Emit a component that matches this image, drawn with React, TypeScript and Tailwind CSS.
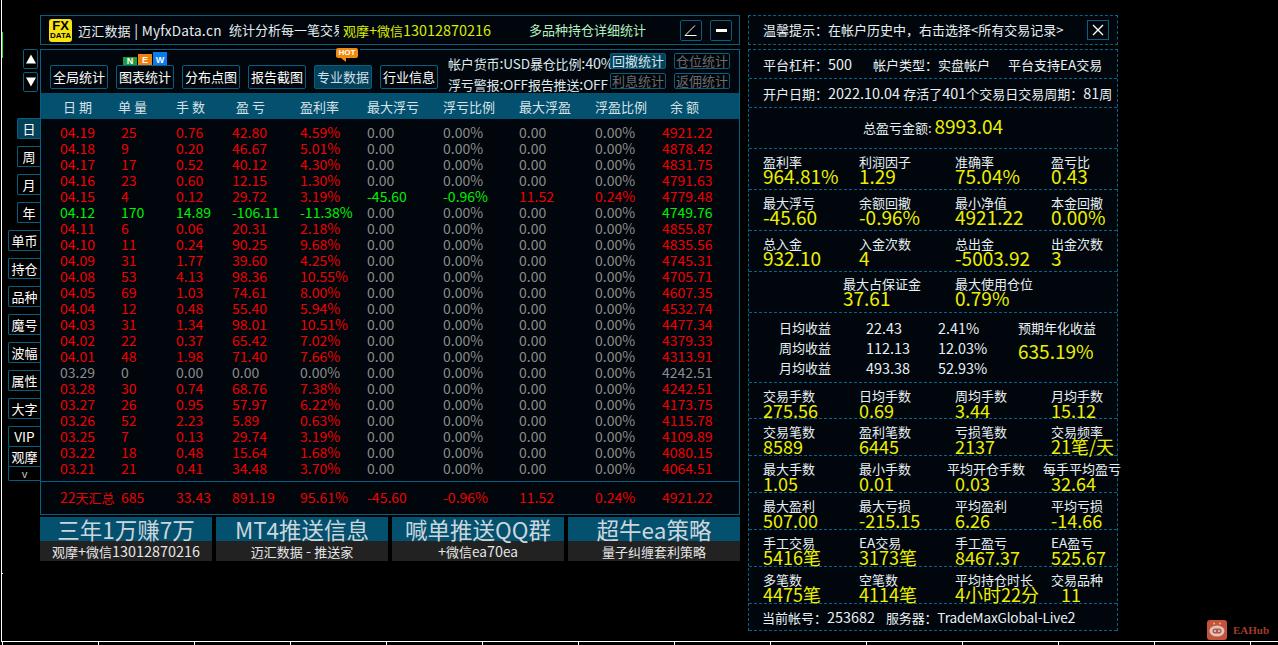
import type { ReactNode } from "react";

const RED = "text-[#f00000]";
const GREEN = "text-[#00f000]";
const GREY = "text-[#8c8c8c]";
const YELLOW = "text-[#ecf000]";

const COLS = "grid grid-cols-[61px_55px_56px_68px_67px_76px_76px_76px_67px_1fr]";

const headers = [
  { label: "日 期", cls: "pl-[3px]" },
  { label: "单 量", cls: "-ml-[3px]" },
  { label: "手 数", cls: "" },
  { label: "盈 亏", cls: "pl-[4px]" },
  { label: "盈利率", cls: "" },
  { label: "最大浮亏", cls: "" },
  { label: "浮亏比例", cls: "" },
  { label: "最大浮盈", cls: "" },
  { label: "浮盈比例", cls: "" },
  { label: "余 额", cls: "pl-[8px]" },
];

const rows = [
  ["04.19", "25", "0.76", "42.80", "4.59%", "4921.22"],
  ["04.18", "9", "0.20", "46.67", "5.01%", "4878.42"],
  ["04.17", "17", "0.52", "40.12", "4.30%", "4831.75"],
  ["04.16", "23", "0.60", "12.15", "1.30%", "4791.63"],
  ["04.15", "4", "0.12", "29.72", "3.19%", "4779.48"],
  ["04.12", "170", "14.89", "-106.11", "-11.38%", "4749.76"],
  ["04.11", "6", "0.06", "20.31", "2.18%", "4855.87"],
  ["04.10", "11", "0.24", "90.25", "9.68%", "4835.56"],
  ["04.09", "31", "1.77", "39.60", "4.25%", "4745.31"],
  ["04.08", "53", "4.13", "98.36", "10.55%", "4705.71"],
  ["04.05", "69", "1.03", "74.61", "8.00%", "4607.35"],
  ["04.04", "12", "0.48", "55.40", "5.94%", "4532.74"],
  ["04.03", "31", "1.34", "98.01", "10.51%", "4477.34"],
  ["04.02", "22", "0.37", "65.42", "7.02%", "4379.33"],
  ["04.01", "48", "1.98", "71.40", "7.66%", "4313.91"],
  ["03.29", "0", "0.00", "0.00", "0.00%", "4242.51"],
  ["03.28", "30", "0.74", "68.76", "7.38%", "4242.51"],
  ["03.27", "26", "0.95", "57.97", "6.22%", "4173.75"],
  ["03.26", "52", "2.23", "5.89", "0.63%", "4115.78"],
  ["03.25", "7", "0.13", "29.74", "3.19%", "4109.89"],
  ["03.22", "18", "0.48", "15.64", "1.68%", "4080.15"],
  ["03.21", "21", "0.41", "34.48", "3.70%", "4064.51"],
];

const summary = ["22天汇总", "685", "33.43", "891.19", "95.61%", "-45.60", "-0.96%", "11.52", "0.24%", "4921.22"];

const banners = [
  { big: "三年1万赚7万", small: "观摩+微信13012870216" },
  { big: "MT4推送信息", small: "迈汇数据 - 推送家" },
  { big: "喊单推送QQ群", small: "+微信ea70ea" },
  { big: "超牛ea策略", small: "量子纠缠套利策略" },
];

const tools = ["全局统计", "图表统计", "分布点图", "报告截图", "专业数据", "行业信息"];
const tabsA = ["日", "周", "月", "年"];
const tabsB = ["单币", "持仓", "品种", "魔号", "波幅", "属性", "大字"];

// the CJK runs in the reference are 13px while its digits are wider, so mixed strings get split
function T({ text }: { text: string }) {
  const parts = text.split(/([\u3000-\u303f\u4e00-\u9fff\uff00-\uffef]+|[A-Za-z]+)/).filter(Boolean);
  return (
    <>
      {parts.map((p, i) => {
        if (/^[A-Za-z]/.test(p)) return <span key={i} className="text-[13.6px]">{p}</span>;
        if (/^[\u3000-\u303f\u4e00-\u9fff\uff00-\uffef]/.test(p)) return <span key={i} className="text-[13px]">{p}</span>;
        return <span key={i}>{p}</span>;
      })}
    </>
  );
}

function rowColor(date: string) {
  if (date === "03.29") return GREY;
  if (date === "04.12") return GREEN;
  return RED;
}

function TableRow({ row }: { row: string[] }) {
  const color = rowColor(row[0]);
  const isLoss = row[0] === "04.15";
  return (
    <div className={`${COLS} h-4 text-[14px] leading-4 pl-[19px]`}>
      {row.slice(0, 5).map((cell, i) => (
        <span key={i} className={color}>{cell}</span>
      ))}
      <span className={isLoss ? GREEN : GREY}>{isLoss ? "-45.60" : "0.00"}</span>
      <span className={isLoss ? GREEN : GREY}>{isLoss ? "-0.96%" : "0.00%"}</span>
      <span className={isLoss ? RED : GREY}>{isLoss ? "11.52" : "0.00"}</span>
      <span className={isLoss ? RED : GREY}>{isLoss ? "0.24%" : "0.00%"}</span>
      <span className={color}>{row[5]}</span>
    </div>
  );
}

function Tab({ label, active, className }: { label: string; active?: boolean; className: string }) {
  return (
    <div
      className={`flex items-center justify-center border border-r-0 border-[#045f80] rounded-l-[2px] text-white ${
        active ? "bg-[#03405a]" : "bg-black"
      } ${className}`}
    >
      <T text={label} />
    </div>
  );
}

function ArrowButton({ up }: { up?: boolean }) {
  return (
    <div className="w-[15px] h-5 mr-[2px] flex items-center justify-center border border-[#045f80] rounded-[2px]">
      <svg width="10" height="10" viewBox="0 0 10 10">
        <polygon points={up ? "5,0.5 10,9.5 0,9.5" : "0,0.5 10,0.5 5,9.5"} fill="#fff" />
      </svg>
    </div>
  );
}

function SmallButton({ label, active }: { label: string; active?: boolean }) {
  return (
    <div
      className={`w-[56px] h-[16px] flex items-center justify-center overflow-hidden whitespace-nowrap border border-[#045f80] rounded-[2px] text-[13px] leading-[14px] ${
        active ? "bg-[#03405a] text-[#d5e5ea]" : "text-[#6c6c6c]"
      }`}
    >
      {label}
    </div>
  );
}

function Section({ className, children }: { className: string; children: ReactNode }) {
  return (
    <div className={`border-b border-dashed border-[#04658a] overflow-visible box-border ${className}`}>
      {children}
    </div>
  );
}

type Stat = { label: string; value: string; labelCls?: string; valueCls?: string };

function StatRow({ stats, size, className }: { stats: Stat[]; size: string; className: string }) {
  return (
    <Section className={`grid grid-cols-[96px_96px_96px_1fr] pl-[14px] pt-[4px] ${className}`}>
      {stats.map((s) => (
        <div key={s.label} className="whitespace-nowrap">
          <div className={`leading-[15px] text-[#e8f0f4] ${s.labelCls ?? ""}`}><T text={s.label} /></div>
          <div className={`${size} leading-[14px] ${YELLOW} ${s.valueCls ?? ""}`}>{s.value}</div>
        </div>
      ))}
    </Section>
  );
}

function Logo() {
  return (
    <div className="w-[23px] h-[23px] bg-[#f7e310] rounded-[3px] flex flex-col items-center justify-center text-black font-bold [font-family:'Liberation_Sans',sans-serif] mr-[6px] shrink-0">
      <span className="text-[13px] leading-[11px]">FX</span>
      <span className="text-[8px] leading-[9px]">DATA</span>
    </div>
  );
}

function EAHubBadge() {
  return (
    <div className="absolute left-[1207px] top-[620px] flex items-center gap-[6px]">
      <svg width="20" height="20" viewBox="0 0 20 20">
        <rect width="20" height="20" rx="3" fill="#c4533a" />
        <circle cx="7" cy="3.5" r="1" fill="#d9b8ac" />
        <circle cx="13" cy="3.5" r="1" fill="#d9b8ac" />
        <ellipse cx="10" cy="11" rx="7.5" ry="5.5" fill="#d8c6bf" />
        <rect x="5.5" y="8.5" width="9" height="5" rx="2.5" fill="#b5563f" />
        <circle cx="8" cy="11" r="1" fill="#e6d8d2" />
        <circle cx="12" cy="11" r="1" fill="#e6d8d2" />
      </svg>
      <span className="text-[11px] font-bold leading-5 text-[#a03c28] [font-family:'Liberation_Serif',serif]">EAHub</span>
    </div>
  );
}

function ChartAxes() {
  const ticks = Array.from({ length: 14 }, (_, i) => 2.5 + 96 * i);
  return (
    <svg className="absolute inset-0 pointer-events-none" width="1278" height="645" viewBox="0 0 1278 645">
      <line x1="1.5" y1="0" x2="1.5" y2="641" stroke="#fff" />
      <line x1="2.5" y1="32" x2="2.5" y2="58" stroke="#22dd22" />
      <line x1="2" y1="573.5" x2="3" y2="573.5" stroke="#fff" />
      <line x1="1" y1="641.5" x2="1278" y2="641.5" stroke="#fff" />
      {ticks.map((x) => (
        <line key={x} x1={x} y1="642" x2={x} y2="645" stroke="#fff" />
      ))}
    </svg>
  );
}

export default function App() {
  return (
    <div className="relative h-[645px] w-full overflow-hidden bg-black text-[14.4px] text-white [font-family:'Noto_Sans_CJK_SC','Noto_Sans',sans-serif]">
      <ChartAxes />
      <EAHubBadge />

      <div className="relative flex pt-[15px] pl-2">
        {/* left tabs */}
        <div className="w-8 flex flex-col items-end pt-[34px]">
          <ArrowButton up />
          <div className="h-[3px]" />
          <ArrowButton />
          <div className="h-[26px]" />
          <div className="flex flex-col gap-[7px] items-end">
            {tabsA.map((t, i) => (
              <Tab key={t} label={t} active={i === 0} className="w-[23px] h-[21px]" />
            ))}
            {tabsB.map((t) => (
              <Tab key={t} label={t} className="w-8 h-[21px]" />
            ))}
          </div>
          <Tab label="VIP" className="w-8 h-[21px] mt-[7px]" />
          <Tab label="观摩" className="w-8 h-[21px] -mt-px" />
          <div className="w-8 h-[15px] -mt-px flex items-center justify-center border border-r-0 border-[#045f80] rounded-bl-[2px] text-[11px] leading-none text-[#ccc]">
            v
          </div>
        </div>

        {/* center */}
        <div className="w-[700px]">
          <div className="h-[30px] flex items-center border border-[#045f80] bg-[#00060b] pl-2 whitespace-nowrap">
            <Logo />
            <span className="w-[151px] tracking-[0.2px] text-[#e4edf2]"><T text="迈汇数据 | MyfxData.cn" /></span>
            <span className="w-[110px] overflow-hidden text-[13px] text-[#e4edf2] mr-[4px]">统计分析每一笔交易数据</span>
            <span className="w-[186px] text-[#dcec00]"><T text="观摩+微信13012870216" /></span>
            <span className="w-[151px] text-[13px] text-[#b5f0c0]">多品种持仓详细统计</span>
            <div className="w-[22px] h-[21px] border border-[#045f80] rounded-[2px] flex items-center justify-center">
              <svg width="14" height="14" viewBox="0 0 14 14">
                <path d="M1 12.5H12.5M1 12.5L11 2.5" stroke="#fff" fill="none" strokeWidth="1" />
              </svg>
            </div>
            <div className="w-[22px] h-[21px] ml-2 border border-[#045f80] rounded-[2px] flex items-center justify-center">
              <div className="w-[11px] h-[3px] bg-white" />
            </div>
          </div>

          <div className="relative mt-1 h-[466px] border border-[#045f80] bg-[#00060b]">
            {/* toolbar */}
            <div className="relative h-[43px] flex">
              <div className="flex gap-2 pl-[9px] pt-[15px]">
                {tools.map((t, i) => (
                  <div
                    key={t}
                    className={`w-[58px] h-6 flex items-center justify-center text-[13px] whitespace-nowrap border border-[#045f80] rounded-[2px] ${
                      i === 4 ? "bg-[#03405a] text-[#cfdfe6]" : "text-white"
                    }`}
                  >
                    {t}
                  </div>
                ))}
              </div>
              <div className="ml-[10px] w-[162px] pt-[3px] tracking-[-0.15px] text-[#dfe8ec] whitespace-nowrap leading-5">
                <div><T text="帐户货币:USD暴仓比例:40%" /></div>
                <div><T text="浮亏警报:OFF报告推送:OFF" /></div>
              </div>
              <div className="pt-[3px] grid grid-cols-[56px_56px] gap-x-2 gap-y-1 h-fit">
                <SmallButton label="回撤统计" active />
                <SmallButton label="仓位统计" />
                <SmallButton label="利息统计" />
                <SmallButton label="返佣统计" />
              </div>

              {/* NEW badge */}
              <div className="absolute left-[82px] top-[1px] w-[44px] h-[14px] bg-black flex items-end gap-px text-[9px] font-bold text-white [font-family:'Liberation_Sans',sans-serif]">
                <span className="w-[14px] h-[8px] bg-[#1f9a3c] flex items-center justify-center leading-none">N</span>
                <span className="w-[14px] h-[11px] bg-[#f08010] flex items-end justify-center leading-[9px]">E</span>
                <span className="w-[14px] h-[13px] bg-[#0a7cf0] flex items-end justify-center leading-[9px]">W</span>
              </div>
              {/* HOT badge */}
              <div className="absolute left-[295px] -top-[2px] w-[24px] h-[15px] bg-black">
                <div className="w-[22px] h-[10px] bg-[#f08a10] rounded-[2px] text-[8px] font-bold text-white flex items-center justify-center leading-none [font-family:'Liberation_Sans',sans-serif]">
                  HOT
                </div>
                <div className="ml-[5px] w-0 h-0 border-l-[5px] border-l-transparent border-t-[4px] border-t-[#f08a10]" />
              </div>
            </div>

            {/* table head */}
            <div className={`${COLS} h-[26px] bg-[#03506f] leading-[27px] pl-[19px] text-[13px] text-[#d8e2e6] whitespace-nowrap`}>
              {headers.map((h) => (
                <span key={h.label} className={h.cls}>{h.label}</span>
              ))}
            </div>

            {/* rows */}
            <div className="pt-[5px] whitespace-nowrap">
              {rows.map((r) => (
                <TableRow key={r[0]} row={r} />
              ))}
            </div>

            {/* summary */}
            <div className={`${COLS} mt-[5px] border-t border-[#045f80] h-[32px] text-[14px] items-center pl-[19px] whitespace-nowrap ${RED}`}>
              {summary.map((s) => (
                <span key={s}><T text={s} /></span>
              ))}
            </div>
          </div>

          {/* banners */}
          <div className="mt-[2px] grid grid-cols-4 gap-1">
            {banners.map((b) => (
              <div key={b.big}>
                <div className="h-6 bg-[#03506f] text-center text-[22.5px] leading-6 text-[#ccd6da] whitespace-nowrap">
                  {b.big}
                </div>
                <div className="h-5 bg-[#222] text-center leading-5 text-[#e6e6e6]"><T text={b.small} /></div>
              </div>
            ))}
          </div>
        </div>

        {/* right panel */}
        <div className="ml-2 w-[370px]">
          <div className="h-[30px] flex items-center justify-between pl-[14px] pr-[8px] border border-dashed border-[#04658a] bg-[#00060b] text-[#e8f0f4]">
            <span className="whitespace-nowrap text-[13px]">
              {"温馨提示\uff1a在帐户历史中\uff0c右击选择<所有交易记录>"}
            </span>
            <div className="w-[22px] h-[20px] border border-[#045f80] flex items-center justify-center shrink-0">
              <svg width="12" height="12" viewBox="0 0 12 12">
                <path d="M1 1L11 11M11 1L1 11" stroke="#fff" strokeWidth="1.4" />
              </svg>
            </div>
          </div>

          <div className="mt-1 border-x border-t border-dashed border-[#04658a] bg-[#00060b]">
            <Section className="h-[29px] flex items-center pl-[14px] whitespace-nowrap text-[#e8f0f4]">
              <span className="w-[110px]"><T text={"平台杠杆\uff1a500"} /></span>
              <span className="w-[135px]"><T text={"帐户类型\uff1a实盘帐户"} /></span>
              <span><T text="平台支持EA交易" /></span>
            </Section>
            <Section className="h-[29px] flex items-center pl-[14px] whitespace-nowrap text-[#e8f0f4]">
              <span><T text={"开户日期\uff1a2022.10.04 存活了401个交易日交易周期\uff1a81周"} /></span>
            </Section>
            <Section className="h-[41px] flex items-center justify-center text-[#e8f0f4] whitespace-nowrap">
              <span className="text-[13px] mr-[3px]">总盈亏金额:</span>
              <span className={`text-[19px] -mt-[3px] ${YELLOW}`}>8993.04</span>
            </Section>

            <StatRow
              size="text-[19px]"
              className="h-[41px]"
              stats={[
                { label: "盈利率", value: "964.81%" },
                { label: "利润因子", value: "1.29" },
                { label: "准确率", value: "75.04%" },
                { label: "盈亏比", value: "0.43" },
              ]}
            />
            <StatRow
              size="text-[19px]"
              className="h-[41px]"
              stats={[
                { label: "最大浮亏", value: "-45.60" },
                { label: "余额回撤", value: "-0.96%" },
                { label: "最小净值", value: "4921.22" },
                { label: "本金回撤", value: "0.00%" },
              ]}
            />
            <StatRow
              size="text-[19px]"
              className="h-[41px]"
              stats={[
                { label: "总入金", value: "932.10" },
                { label: "入金次数", value: "4" },
                { label: "总出金", value: "-5003.92" },
                { label: "出金次数", value: "3" },
              ]}
            />

            <Section className="h-[41px] grid grid-cols-[112px_1fr] pl-[94px] pt-[4px] whitespace-nowrap">
              {[
                { label: "最大占保证金", value: "37.61" },
                { label: "最大使用仓位", value: "0.79%" },
              ].map((s) => (
                <div key={s.label}>
                  <div className="text-[13px] leading-[15px] text-[#e8f0f4]">{s.label}</div>
                  <div className={`text-[19px] leading-[14px] ${YELLOW}`}>{s.value}</div>
                </div>
              ))}
            </Section>

            <Section className="h-[70px] flex pl-[30px] pt-[5px] whitespace-nowrap text-[#e8f0f4]">
              <div className="grid grid-cols-[87px_72px_80px] auto-rows-[20px] leading-5">
                <span className="text-[13px]">日均收益</span><span>22.43</span><span>2.41%</span>
                <span className="text-[13px]">周均收益</span><span>112.13</span><span>12.03%</span>
                <span className="text-[13px]">月均收益</span><span>493.38</span><span>52.93%</span>
              </div>
              <div>
                <div className="text-[13px] leading-5">预期年化收益</div>
                <div className={`mt-[2px] text-[19px] leading-[22px] ${YELLOW}`}>635.19%</div>
              </div>
            </Section>

            <StatRow
              size="text-[18px]"
              className="h-[36px]"
              stats={[
                { label: "交易手数", value: "275.56" },
                { label: "日均手数", value: "0.69" },
                { label: "周均手数", value: "3.44" },
                { label: "月均手数", value: "15.12" },
              ]}
            />
            <StatRow
              size="text-[18px]"
              className="h-[37px]"
              stats={[
                { label: "交易笔数", value: "8589" },
                { label: "盈利笔数", value: "6445" },
                { label: "亏损笔数", value: "2137" },
                { label: "交易频率", value: "21笔/天" },
              ]}
            />
            <StatRow
              size="text-[18px]"
              className="h-[37px]"
              stats={[
                { label: "最大手数", value: "1.05" },
                { label: "最小手数", value: "0.01" },
                { label: "平均开仓手数", value: "0.03", labelCls: "-ml-2" },
                { label: "每手平均盈亏", value: "32.64", labelCls: "-ml-2" },
              ]}
            />
            <StatRow
              size="text-[18px]"
              className="h-[37px]"
              stats={[
                { label: "最大盈利", value: "507.00" },
                { label: "最大亏损", value: "-215.15" },
                { label: "平均盈利", value: "6.26" },
                { label: "平均亏损", value: "-14.66" },
              ]}
            />
            <StatRow
              size="text-[18px]"
              className="h-[37px]"
              stats={[
                { label: "手工交易", value: "5416笔" },
                { label: "EA交易", value: "3173笔" },
                { label: "手工盈亏", value: "8467.37" },
                { label: "EA盈亏", value: "525.67" },
              ]}
            />
            <StatRow
              size="text-[18px]"
              className="h-[37px]"
              stats={[
                { label: "多笔数", value: "4475笔" },
                { label: "空笔数", value: "4114笔" },
                { label: "平均持仓时长", value: "4小时22分" },
                { label: "交易品种", value: "11", valueCls: "pl-[10px]" },
              ]}
            />
            <Section className="h-[27px] flex items-center pl-[13px] whitespace-nowrap text-[#e8f0f4]">
              <span className="mr-[11px]"><T text={"当前帐号\uff1a253682"} /></span>
              <span className="tracking-[-0.15px]"><T text={"服务器\uff1aTradeMaxGlobal-Live2"} /></span>
            </Section>
          </div>
        </div>
      </div>
    </div>
  );
}
